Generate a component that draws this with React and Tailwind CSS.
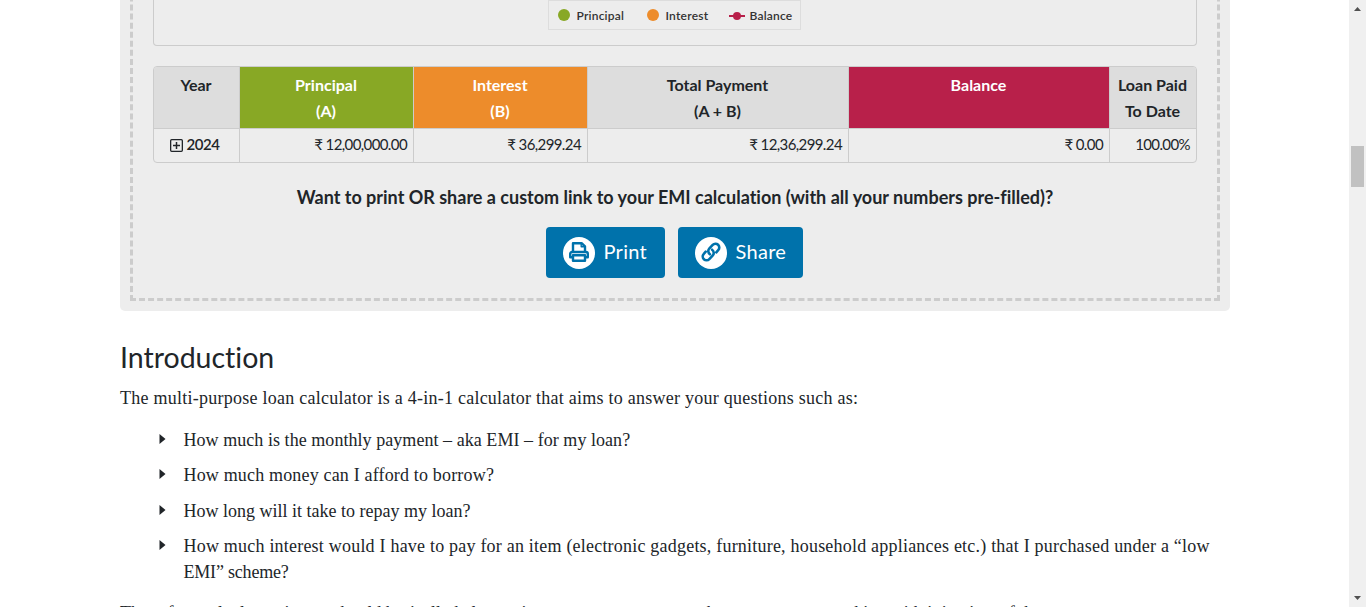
import React from "react";

function PlusSquareIcon() {
  return (
    <svg width="13" height="13" viewBox="0 0 13 13" fill="none" stroke="#212529" className="-mt-px shrink-0">
      <rect x="0.65" y="0.65" width="11.7" height="11.7" rx="1" strokeWidth="1.3" />
      <path d="M3 6.5h7M6.5 3v7" strokeWidth="1.5" />
    </svg>
  );
}

function PrintIcon() {
  return (
    <svg width="20" height="20" viewBox="0 0 20 20" fill="none" stroke="#0072ab" strokeWidth="2.4" strokeLinejoin="round" className="-mt-px">
      <path d="M4 10V1.2h8.6L16 4.4V10" />
      <path d="M12.2 1v3.8H16" strokeWidth="1.4" />
      <path d="M4 15.2H1.2v-3.4A1.8 1.8 0 0 1 3 10h14a1.8 1.8 0 0 1 1.8 1.8v3.4H16" />
      <path d="M4 13.2h12v5.6H4z" />
    </svg>
  );
}

function LinkIcon() {
  return (
    <svg width="20" height="20" viewBox="0 0 20 20" fill="none" stroke="#0072ab" strokeWidth="2.6" strokeLinecap="round" strokeLinejoin="round" className="-mt-px">
      <path d="M8.9 12.3a3.9 3.9 0 0 1-.5-5.9l3.3-3.5a3.8 3.8 0 0 1 5.5 5.3l-1.9 2.1" />
      <path d="M11.1 7.7a3.9 3.9 0 0 1 .5 5.9l-3.3 3.5a3.8 3.8 0 0 1-5.5-5.3l1.9-2.1" />
    </svg>
  );
}

function Legend() {
  return (
    <div className="mr-[2px] flex h-[30px] w-[253px] items-center border border-[#dddddd] pl-[9px] text-[12px] font-semibold text-[#333333]">
      <span className="h-3 w-3 rounded-full bg-[#88a825]" />
      <span className="ml-[7px] w-[70px] pt-px tracking-[0.2px]">Principal</span>
      <span className="h-3 w-3 rounded-full bg-[#ed8c2b]" />
      <span className="ml-[7px] w-[63px] pt-px tracking-[0.25px]">Interest</span>
      <svg width="16" height="10" viewBox="0 0 16 10" className="mt-px">
        <path d="M0 5h16" stroke="#b8204a" strokeWidth="2" />
        <circle cx="8" cy="5" r="4" fill="#b8204a" />
      </svg>
      <span className="ml-[5px] pt-px tracking-[0.2px]">Balance</span>
    </div>
  );
}

const COLUMNS = "grid grid-cols-[86px_174px_174px_261px_261px_86px]";

function PaymentTable() {
  return (
    <div className="mt-5 h-[97px] w-[1044px] shrink-0 overflow-hidden rounded border border-[#cccccc] text-[15px]">
      <div className={COLUMNS + " h-[62px] border-b border-[#cccccc] bg-[#dddddd] text-center text-[16px] font-bold leading-[25.5px] *:border-r *:border-[#cccccc] *:pr-px *:pt-[5px]"}>
        <div>Year</div>
        <div className="bg-[#88a825] text-white">Principal<br />(A)</div>
        <div className="bg-[#ed8c2b] text-white">Interest<br />(B)</div>
        <div>Total Payment<br />(A + B)</div>
        <div className="bg-[#b8204a] text-white">Balance</div>
        <div className="border-r-0!">Loan Paid<br />To Date</div>
      </div>
      <div className={COLUMNS + " h-[33px] text-right leading-[31px] tracking-[-0.6px] *:border-r *:border-[#cccccc] *:pr-[6px]"}>
        <div className="flex items-center justify-center gap-[3px] pl-[3px] font-semibold tracking-[-0.4px]">
          <PlusSquareIcon />
          <span className="-mt-[2px]">2024</span>
        </div>
        <div>₹ 12,00,000.00</div>
        <div>₹ 36,299.24</div>
        <div>₹ 12,36,299.24</div>
        <div>₹ 0.00</div>
        <div className="border-r-0!">100.00%</div>
      </div>
    </div>
  );
}

function ActionButton({ icon, label, width }) {
  return (
    <button className={"flex h-[51px] items-center rounded bg-[#0072ab] pl-[17px] text-[20px] text-white " + width}>
      <span className="mr-[9px] flex h-8 w-8 items-center justify-center rounded-full bg-white">{icon}</span>
      <span className="-mt-[3px] tracking-[0.3px]">{label}</span>
    </button>
  );
}

function Bullet({ children }) {
  return (
    <li className="mb-[10px] flex">
      <svg width="7" height="10" viewBox="0 0 7 10" className="mr-[17.5px] mt-[6px] shrink-0">
        <path d="M0.5 0v10L6.5 5z" fill="#212529" />
      </svg>
      <span className="min-w-0 whitespace-nowrap">{children}</span>
    </li>
  );
}

export default function App() {
  return (
    <div className="flex h-[607px] w-[1366px] overflow-hidden bg-white font-['Lato',sans-serif] text-[#212529]">
      <div className="h-[607px] w-[1349px] overflow-hidden pl-[120px]">
        <div className="h-[311px] w-[1110px] overflow-hidden rounded-b-[5px] bg-[#ededed] px-[10px]">
          <div className="-mt-[50px] flex h-[351px] flex-col items-center border-[3px] border-dashed border-[#cccccc] pt-[37px]">
            <div className="flex h-[56px] w-[1044px] shrink-0 flex-col items-center rounded-b border border-t-0 border-[#cccccc] pt-[10px]">
              <Legend />
            </div>
            <PaymentTable />
            <h4 className="mt-[21px] text-[18px] font-bold leading-[26px] [font-variant-ligatures:none]">
              Want to print OR share a custom link to your EMI calculation (with all your numbers pre-filled)?
            </h4>
            <div className="mr-[2px] mt-[17px] flex gap-[13px]">
              <ActionButton icon={<PrintIcon />} label="Print" width="w-[119px]" />
              <ActionButton icon={<LinkIcon />} label="Share" width="w-[125px]" />
            </div>
          </div>
        </div>

        <h2 className="mt-[29px] text-[28.5px] leading-[34px] [font-variant-ligatures:none]">Introduction</h2>
        <div className="w-[1110px] font-['Liberation_Serif',serif] text-[18px] leading-[25.5px]">
          <p className="mt-[12px] whitespace-nowrap tracking-[0.25px]">The multi-purpose loan calculator is a 4-in-1 calculator that aims to answer your questions such as:</p>
          <ul className="mt-[16px] pl-[39px]">
            <Bullet><span className="tracking-[0.05px]">How much is the monthly payment – aka EMI – for my loan?</span></Bullet>
            <Bullet><span className="tracking-[0.17px]">How much money can I afford to borrow?</span></Bullet>
            <Bullet>How long will it take to repay my loan?</Bullet>
            <Bullet><span className="tracking-[0.21px]">How much interest would I have to pay for an item (electronic gadgets, furniture, household appliances etc.) that I purchased under a “low</span><br /><span className="tracking-[-0.2px]">EMI” scheme?</span></Bullet>
          </ul>
          <p className="mt-[16px] whitespace-nowrap">These four calculators in one should basically help you in most common cases, whenever you are working with it in view of the terms</p>
        </div>
      </div>

      <div className="flex h-[607px] w-[17px] flex-col items-center bg-[#f0f0f0]">
        <svg width="7" height="4" viewBox="0 0 7 4" className="mt-[7px]"><path d="M0 4L3.5 0L7 4z" fill="#505050" /></svg>
        <div className="mt-[135px] h-[41px] w-[13px] bg-[#c1c1c1]" />
        <svg width="7" height="4" viewBox="0 0 7 4" className="mt-auto mb-[7px]"><path d="M0 0L3.5 4L7 0z" fill="#505050" /></svg>
      </div>
    </div>
  );
}
